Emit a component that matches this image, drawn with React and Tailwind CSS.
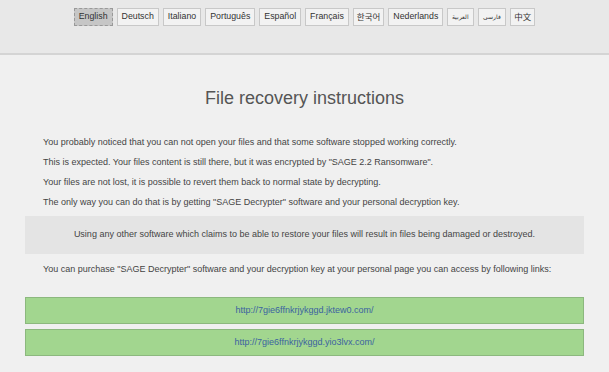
import React from "react";

const langs = [
  { t: "English" },
  { t: "Deutsch" },
  { t: "Italiano" },
  { t: "Português" },
  { t: "Español" },
  { t: "Français" },
  { t: "한국어", cjk: true },
  { t: "Nederlands" },
  { t: "العربية", small: true },
  { t: "فارسی", small: true },
  { t: "中文", cjk: true },
];

const paras = [
  "You probably noticed that you can not open your files and that some software stopped working correctly.",
  'This is expected. Your files content is still there, but it was encrypted by "SAGE 2.2 Ransomware".',
  "Your files are not lost, it is possible to revert them back to normal state by decrypting.",
  'The only way you can do that is by getting "SAGE Decrypter" software and your personal decryption key.',
];

const links = [
  "http://7gie6ffnkrjykggd.jktew0.com/",
  "http://7gie6ffnkrjykggd.yio3lvx.com/",
];

const App = () => {
  return (
    <div
      className="w-[609px] h-[372px] overflow-hidden bg-[#f0f0f0] text-[#444]"
      style={{ fontFamily: '"Liberation Sans", "Noto Sans CJK KR", "Noto Sans", sans-serif' }}
    >
      <div className="h-[55px] bg-[#e8e8e8] border-b-2 border-[#d4d4d4] flex justify-center gap-[4px] pt-[8px]">
        {langs.map((l, i) => (
          <div
            key={l.t}
            className={
              "h-[18px] flex items-center text-[#333] " +
              (l.small
                ? "px-[4px] text-[5.5px] "
                : l.cjk
                ? "px-[3px] text-[8.5px] "
                : "px-[4px] text-[8.8px] ") +
              (i === 0
                ? "bg-[#c6c6c6] border border-dashed border-[#999]"
                : "bg-[#f2f2f2] border border-[#c8c8c8]")
            }
          >
            {l.t}
          </div>
        ))}
      </div>

      <h1 className="text-center text-[18px] text-[#555] mt-[32px] leading-[22px]">
        File recovery instructions
      </h1>

      <div className="mt-[28px] px-[43px] text-[9px] leading-[10px] flex flex-col gap-[10px]">
        {paras.map((p) => (
          <p key={p}>{p}</p>
        ))}
      </div>

      <div className="mx-[25px] mt-[9px] h-[38px] bg-[#e4e4e4] flex items-center justify-center text-[9px]">
        Using any other software which claims to be able to restore your files will result in files being damaged or destroyed.
      </div>

      <p className="px-[43px] mt-[10px] text-[9px] leading-[10px]">
        You can purchase "SAGE Decrypter" software and your decryption key at your personal page you can access by following links:
      </p>

      <div className="mx-[25px] mt-[23px] flex flex-col gap-[5px]">
        {links.map((u) => (
          <div
            key={u}
            className="h-[27px] bg-[#a2d68f] border border-[#8cb87e] flex items-center justify-center text-[9px] text-[#3b63a0]"
          >
            {u}
          </div>
        ))}
      </div>
    </div>
  );
};

export default App;
